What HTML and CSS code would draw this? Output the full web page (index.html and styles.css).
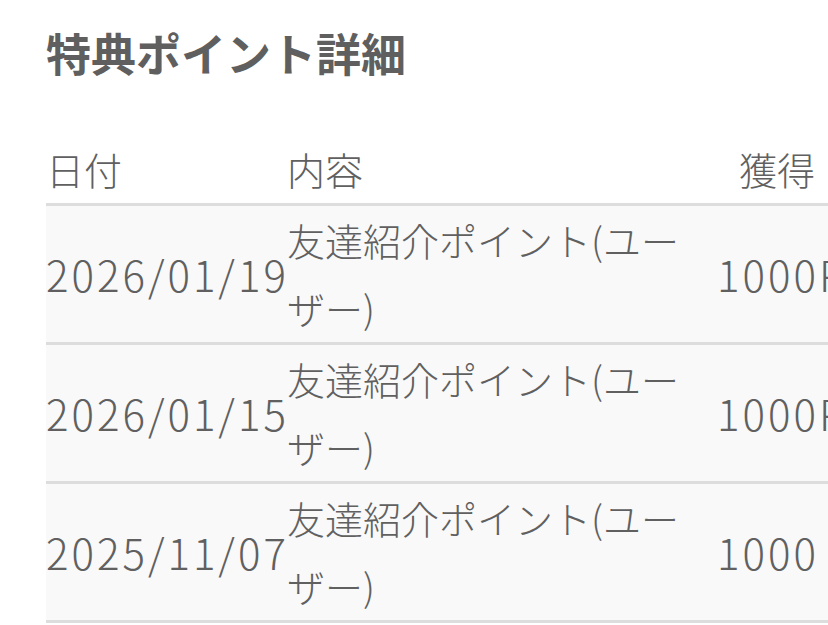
FILE: index.html
```html
<!DOCTYPE html>
<html lang="ja">
<head>
<meta charset="utf-8">
<title>特典ポイント詳細</title>
<link rel="stylesheet" href="styles.css">
</head>
<body>
<main class="page">
  <h1 class="title">特典ポイント詳細</h1>
  <table class="points">
    <colgroup>
      <col class="col-date">
      <col class="col-desc">
      <col class="col-pt">
    </colgroup>
    <thead>
      <tr>
        <th class="h-left">日付</th>
        <th class="h-left">内容</th>
        <th class="h-center">獲得</th>
      </tr>
    </thead>
    <tbody>
      <tr>
        <td class="num">2026/01/19</td>
        <td class="desc">友達紹介ポイント(ユーザー)</td>
        <td class="num">1000P</td>
      </tr>
      <tr>
        <td class="num">2026/01/15</td>
        <td class="desc">友達紹介ポイント(ユーザー)</td>
        <td class="num">1000P</td>
      </tr>
      <tr>
        <td class="num">2025/11/07</td>
        <td class="desc">友達紹介ポイント(ユーザー)</td>
        <td class="num">1000</td>
      </tr>
    </tbody>
  </table>
</main>
</body>
</html>
```
FILE: styles.css
```css
html, body {
  margin: 0;
  padding: 0;
  background: #ffffff;
  overflow: hidden;
}

body {
  width: 828px;
  height: 625px;
  font-family: "Noto Sans CJK JP", "Noto Sans", sans-serif;
  color: #666666;
}

.page {
  padding: 23px 0 0 46px;
  width: 900px;
}

.title {
  margin: 0 0 52px 0;
  font-size: 45px;
  line-height: 60px;
  font-weight: 700;
  color: #5f5f5f;
}

.points {
  border-collapse: separate;
  border-spacing: 0;
  table-layout: fixed;
  width: 791px;
  font-size: 38px;
  line-height: 68px;
  font-weight: 300;
  color: #606060;
}

.col-date { width: 241px; }
.col-desc { width: 430px; }
.col-pt { width: 120px; }

.points th {
  font-weight: 300;
  padding: 0;
  border-bottom: 3px solid #dddddd;
  white-space: nowrap;
}

.h-left { text-align: left; }
.h-center { text-align: center; }

.points td {
  padding: 0;
  background: #f9f9f9;
  border-bottom: 3px solid #dddddd;
  vertical-align: middle;
  text-align: left;
}

.points td.num {
  font-size: 42px;
  letter-spacing: 3px;
  white-space: nowrap;
}

.points td.desc {
  padding-right: 20px;
}
```
